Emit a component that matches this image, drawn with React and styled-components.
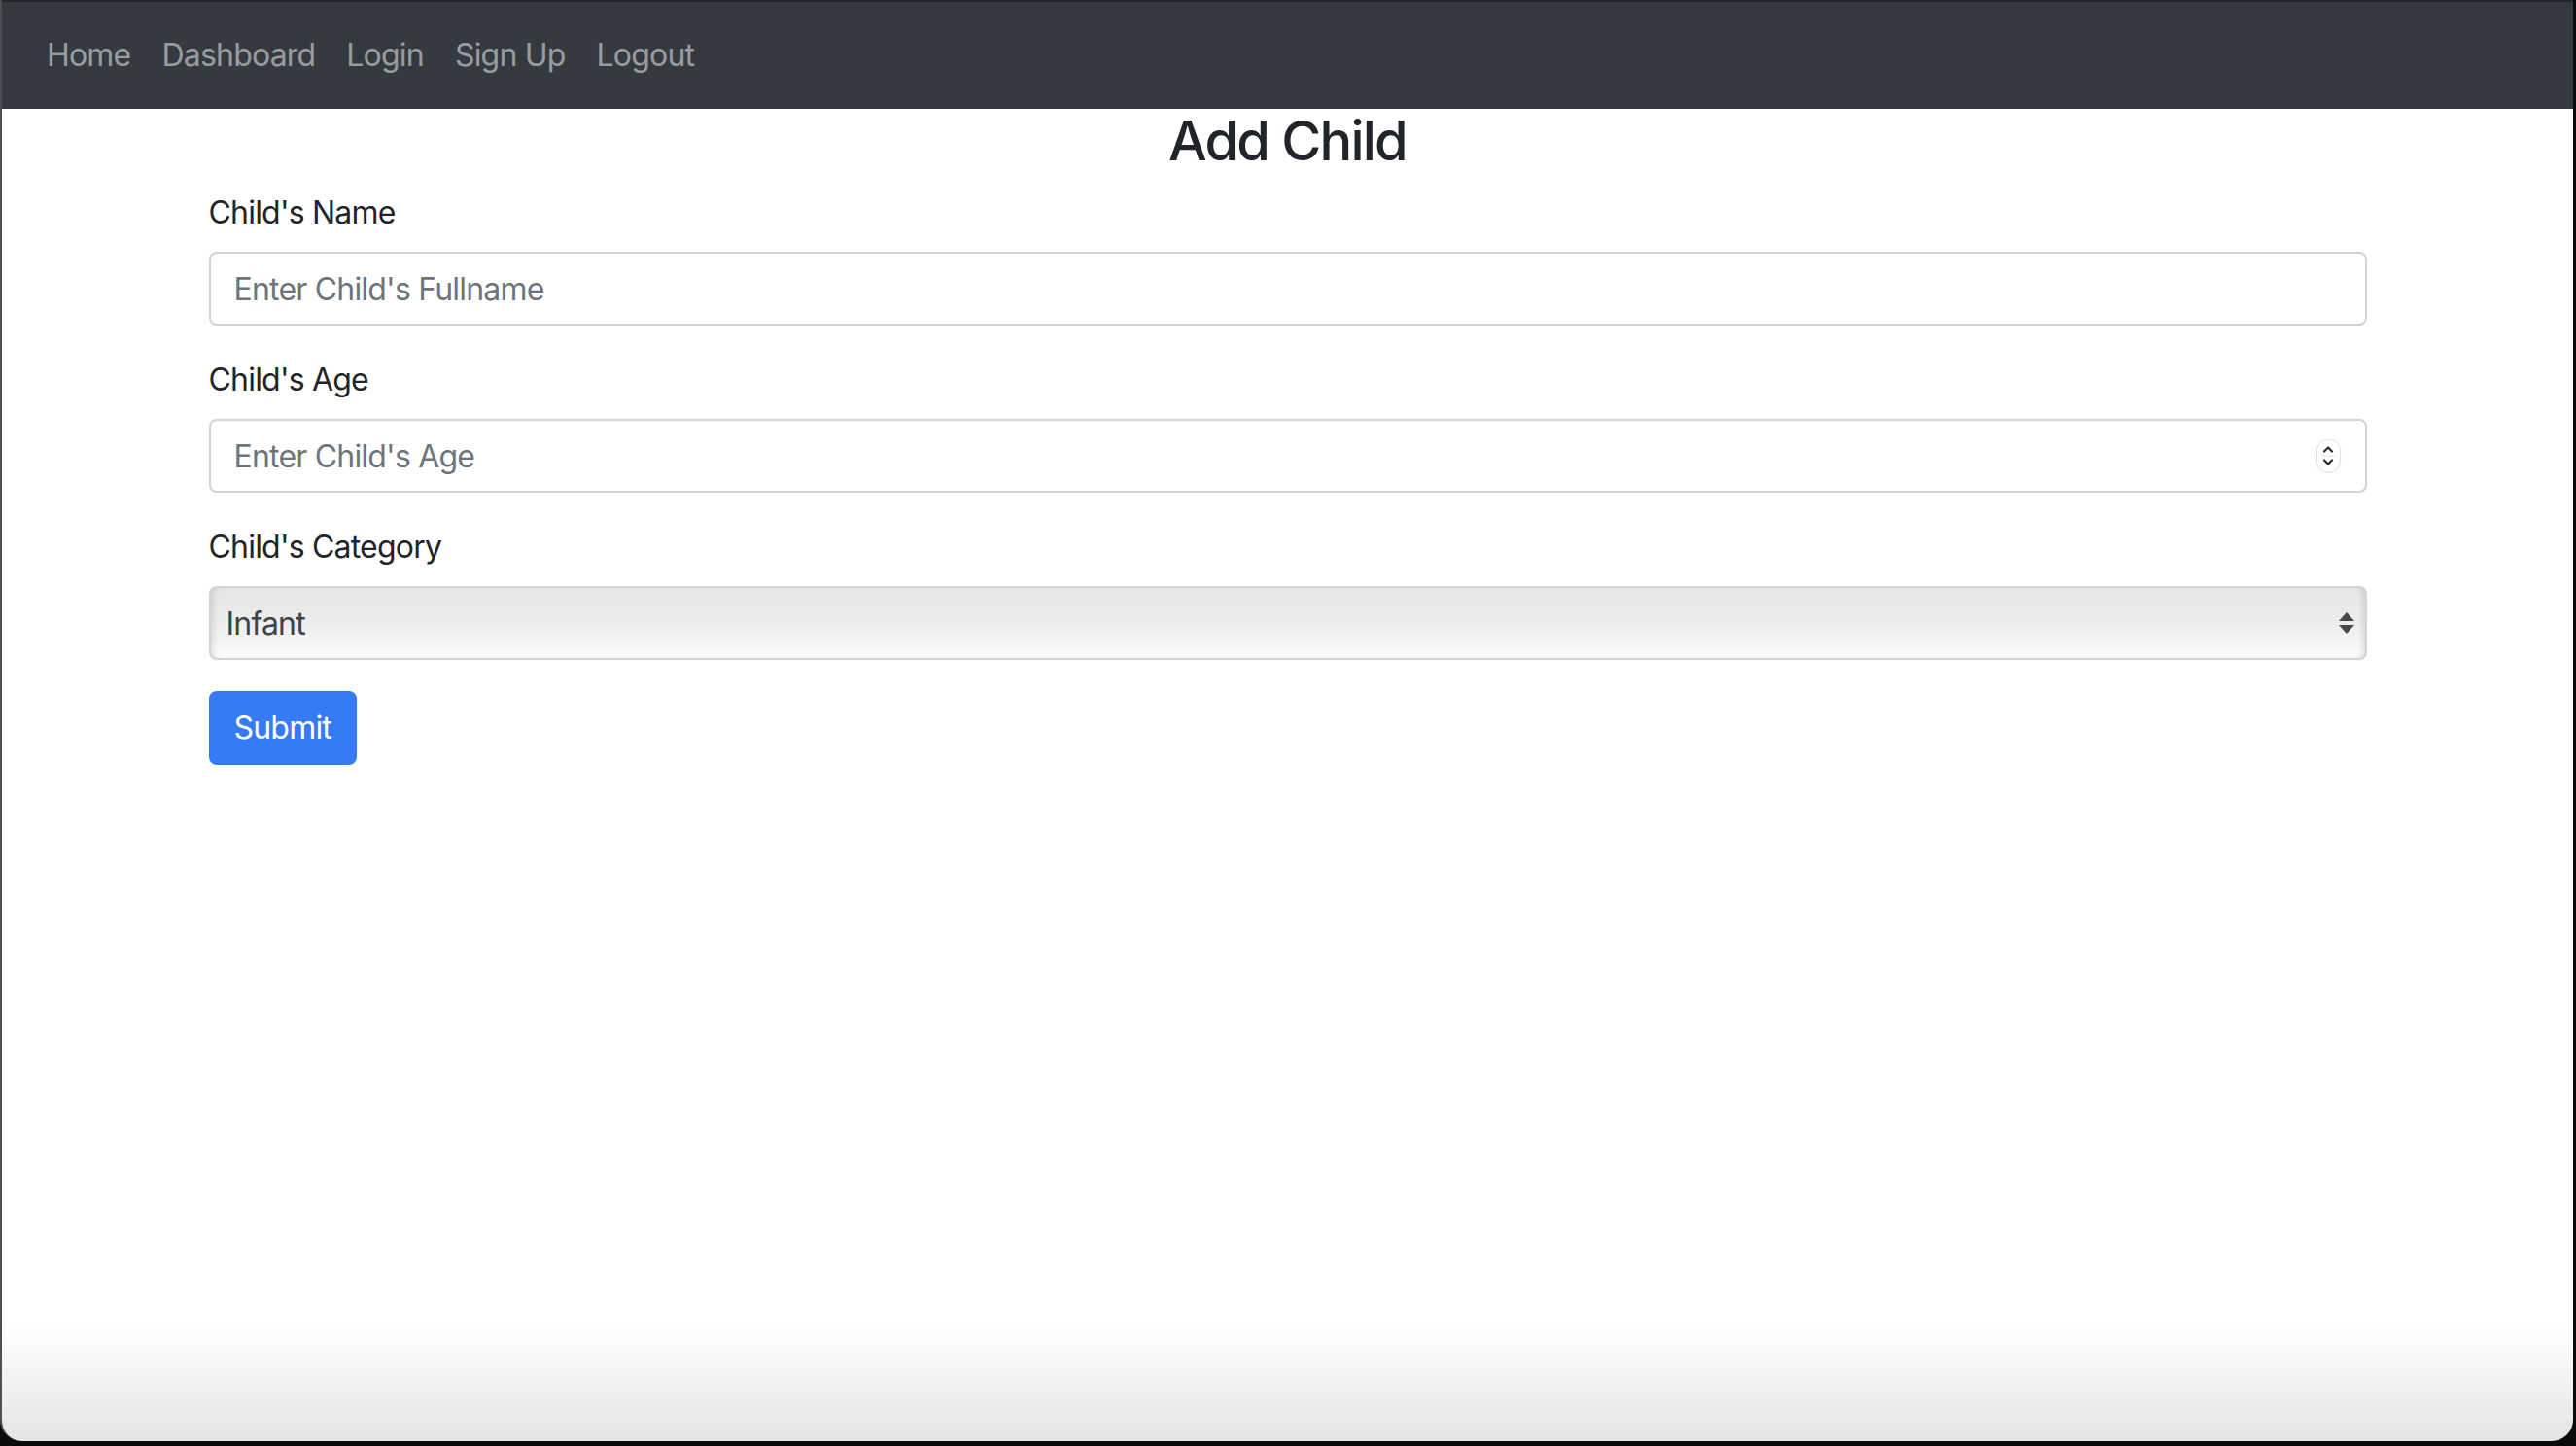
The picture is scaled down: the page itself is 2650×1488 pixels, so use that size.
import React from 'react'
import styled, { createGlobalStyle } from 'styled-components'

const GlobalStyle = createGlobalStyle`
  html, body {
    margin: 0;
    padding: 0;
    background: #0b0b0b;
  }
  * {
    box-sizing: border-box;
  }
`

const Frame = styled.div`
  width: 2650px;
  height: 1488px;
  padding: 0 3px 5px 0;
  background: #0b0b0b;
  display: flex;
`

const Screen = styled.div`
  flex: 1;
  display: flex;
  flex-direction: column;
  border-left: 2px solid #4d4f52;
  border-radius: 0 0 22px 22px;
  overflow: hidden;
  background: linear-gradient(to bottom, #ffffff calc(100% - 120px), #e4e4e4 100%);
  font-family: Inter, 'Noto Sans', sans-serif;
`

const Navbar = styled.nav`
  display: flex;
  align-items: center;
  height: 112px;
  padding: 0 30px;
  border-top: 2px solid #222527;
  background-color: #343a40;
`

const NavLink = styled.a`
  padding: 16px;
  font-size: 32px;
  line-height: 48px;
  color: rgba(255, 255, 255, 0.5);
  text-decoration: none;
  letter-spacing: -0.8px;
`

const Container = styled.main`
  width: 100%;
  max-width: 2280px;
  margin: 0 auto;
  padding: 0 30px;
`

const Title = styled.h3`
  margin: 0 0 16px;
  text-align: center;
  font-size: 56px;
  font-weight: 500;
  line-height: 1.2;
  color: #212529;
  letter-spacing: -1.8px;
`

const FormGroup = styled.div`
  margin-bottom: 32px;
`

const Label = styled.label`
  display: inline-block;
  margin-bottom: 16px;
  font-size: 32px;
  line-height: 48px;
  color: #212529;
  letter-spacing: -0.8px;
`

const Field = styled.div`
  position: relative;
`

const Input = styled.input`
  display: block;
  width: 100%;
  height: 76px;
  padding: 12px 24px;
  font-family: inherit;
  font-size: 32px;
  line-height: 48px;
  color: #495057;
  background: #fff;
  border: 2px solid #ced4da;
  border-radius: 8px;
  outline: none;
  letter-spacing: -0.8px;

  &::placeholder {
    color: #6c757d;
  }
  &::-webkit-inner-spin-button,
  &::-webkit-outer-spin-button {
    -webkit-appearance: none;
    margin: 0;
  }
`

const Spinner = styled.span`
  position: absolute;
  right: 28px;
  top: 50%;
  transform: translateY(-50%);
  width: 23px;
  height: 33px;
  border-radius: 12px;
  background: #fff;
  box-shadow: 0 0 0 1px #e3e3e3, 0 1px 2px rgba(0, 0, 0, 0.12);
  display: flex;
  align-items: center;
  justify-content: center;
`

const Select = styled.div`
  display: flex;
  align-items: center;
  justify-content: space-between;
  height: 76px;
  padding: 0 10px 0 16px;
  font-size: 32px;
  color: #3d4247;
  border: 2px solid #ced4da;
  border-radius: 8px;
  background: linear-gradient(to bottom, #e6e6e6 0%, #ebebeb 45%, #fbfbfb 100%);
  box-shadow: inset 6px 0 6px -4px rgba(0, 0, 0, 0.12), inset -6px 0 6px -4px rgba(0, 0, 0, 0.12);
  letter-spacing: -0.8px;
`

const Button = styled.button`
  display: inline-block;
  padding: 12px 24px;
  font-family: inherit;
  font-size: 32px;
  line-height: 48px;
  color: #fff;
  background-color: #377af6;
  border: 2px solid #377af6;
  border-radius: 8px;
  letter-spacing: -0.8px;
`

const App = () => {
  return (
    <Frame>
      <GlobalStyle />
      <Screen>
        <Navbar>
          <NavLink href="#">Home</NavLink>
          <NavLink href="#">Dashboard</NavLink>
          <NavLink href="#">Login</NavLink>
          <NavLink href="#">Sign Up</NavLink>
          <NavLink href="#">Logout</NavLink>
        </Navbar>
        <Container>
          <Title>Add Child</Title>
          <FormGroup>
            <Label>Child's Name</Label>
            <Input type="text" placeholder="Enter Child's Fullname" />
          </FormGroup>
          <FormGroup>
            <Label>Child's Age</Label>
            <Field>
              <Input type="number" placeholder="Enter Child's Age" />
              <Spinner>
                <svg width="14" height="25" viewBox="0 0 14 25" fill="none" stroke="#2a2a2a" strokeWidth="2.2" strokeLinecap="round" strokeLinejoin="round">
                  <path d="M3 8 L7 4 L11 8" />
                  <path d="M0 12.5 H14" stroke="#e2e2e2" strokeWidth="1" />
                  <path d="M3 17 L7 21 L11 17" />
                </svg>
              </Spinner>
            </Field>
          </FormGroup>
          <FormGroup>
            <Label>Child's Category</Label>
            <Select>
              <span>Infant</span>
              <svg width="18" height="28" viewBox="0 0 18 28" fill="#45494e">
                <path d="M9 3 L17 12 H1 Z" />
                <path d="M1 16 H17 L9 25 Z" />
              </svg>
            </Select>
          </FormGroup>
          <Button type="submit">Submit</Button>
        </Container>
      </Screen>
    </Frame>
  )
}

export default App
